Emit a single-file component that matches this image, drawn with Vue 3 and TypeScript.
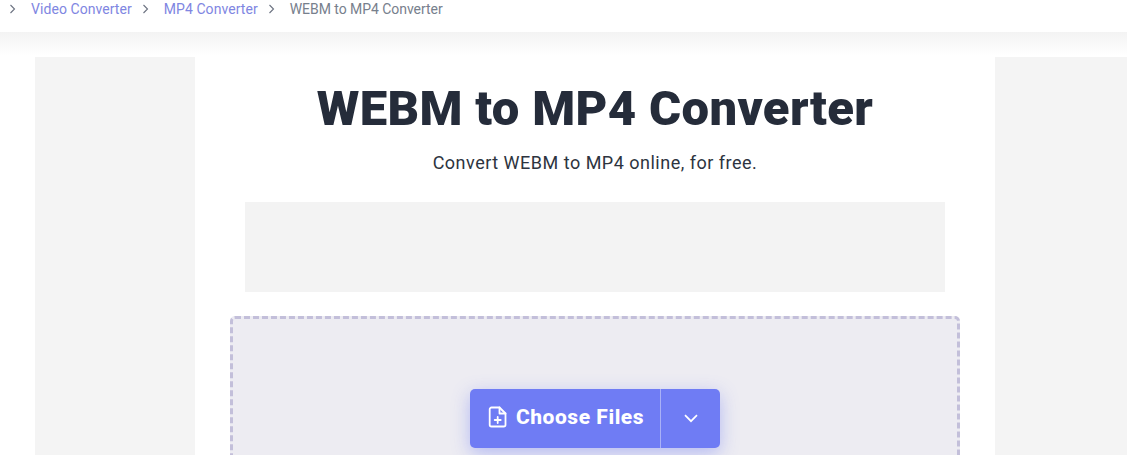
<script setup lang="ts">
const crumbs: string[] = ['Video Converter', 'MP4 Converter']
const current = 'WEBM to MP4 Converter'
</script>

<template>
  <div class="page">
    <header class="topbar">
      <nav class="crumbs">
        <template v-for="c in crumbs" :key="c">
          <svg class="sep" width="8" height="10" viewBox="0 0 8 10"><path d="M1.5 1l4 4-4 4" fill="none" stroke="#6b7280" stroke-width="1.1" /></svg>
          <a class="link">{{ c }}</a>
        </template>
        <svg class="sep" width="8" height="10" viewBox="0 0 8 10"><path d="M1.5 1l4 4-4 4" fill="none" stroke="#6b7280" stroke-width="1.1" /></svg>
        <span class="current">{{ current }}</span>
      </nav>
    </header>
    <div class="layout">
      <aside class="side"></aside>
      <main class="main">
        <h1>WEBM to MP4 Converter</h1>
        <p class="sub">Convert WEBM to MP4 online, for free.</p>
        <div class="ad"></div>
        <section class="drop">
          <div class="btn">
            <button class="choose">
              <svg width="20" height="22" viewBox="0 0 20 22" fill="none" stroke="#fff" stroke-width="1.8" stroke-linejoin="round" stroke-linecap="round">
                <path d="M3.5 1.5h8l6 6v11.2a1.8 1.8 0 0 1-1.8 1.8H3.5a1.8 1.8 0 0 1-1.8-1.8V3.3a1.8 1.8 0 0 1 1.8-1.8z" />
                <path d="M11.5 1.5v6h6" />
                <path d="M9.7 11v6M6.7 14h6" />
              </svg>
              <span>Choose Files</span>
            </button>
            <button class="more" aria-label="More">
              <svg width="14" height="9" viewBox="0 0 14 9"><path d="M1 1.2l6 6 6-6" fill="none" stroke="#fff" stroke-width="1.7" /></svg>
            </button>
          </div>
        </section>
      </main>
      <aside class="side"></aside>
    </div>
  </div>
</template>

<style>
html, body { margin: 0; background: #fff; overflow: hidden; }
</style>

<style scoped>
.page {
  height: 455px;
  overflow: hidden;
  font-family: Roboto, "Noto Sans", sans-serif;
  background: linear-gradient(#fff 32px, #f3f3f3 32px, #fff 56px);
}
.topbar {
  height: 32px;
  background: #fff;
}
.crumbs {
  display: flex;
  align-items: center;
  height: 17px;
  padding-left: 9px;
  font-size: 14px;
  line-height: 16px;
  letter-spacing: 0.06px;
}
.sep { margin-right: 14px; flex: none; }
.link { color: #8086e2; margin-right: 10px; }
.current { color: #77808d; letter-spacing: -0.05px; }
.layout {
  display: grid;
  grid-template-columns: 160px 800px 132px;
  margin: 25px 0 0 35px;
}
.side { background: #f4f4f4; height: 398px; }
.main {
  background: #fff;
  display: flex;
  flex-direction: column;
  align-items: center;
}
h1 {
  margin: 23px 0 0;
  font-size: 49px;
  line-height: 58px;
  font-weight: 900;
  color: #252c3a;
  letter-spacing: 0.35px;
}
.sub {
  margin: 13px 0 0;
  font-size: 18px;
  line-height: 24px;
  color: #2d3440;
  letter-spacing: 0.5px;
}
.ad { width: 700px; height: 90px; background: #f3f3f3; margin-top: 27px; }
.drop {
  box-sizing: border-box;
  width: 730px;
  height: 200px;
  margin-top: 24px;
  background: #edecf2;
  border: 3px dashed #c3bfda;
  border-radius: 5px;
  display: flex;
  justify-content: center;
  padding-top: 70px;
  flex: none;
}
.btn {
  display: flex;
  height: 59px;
  border-radius: 5px;
  background: #6f7cf4;
  box-shadow: 0 5px 18px rgba(111, 124, 244, 0.45);
}
.btn button {
  border: 0;
  background: none;
  color: #fff;
  font-family: inherit;
  display: flex;
  align-items: center;
  padding: 0;
}
.btn .choose {
  width: 191px;
  justify-content: center;
  gap: 8px;
  padding: 0 0 3px 2px;
  font-size: 21px;
  font-weight: 800;
  letter-spacing: 0.55px;
  border-right: 1px solid #a9b1f7;
}
.more { width: 59px; justify-content: center; }
</style>
